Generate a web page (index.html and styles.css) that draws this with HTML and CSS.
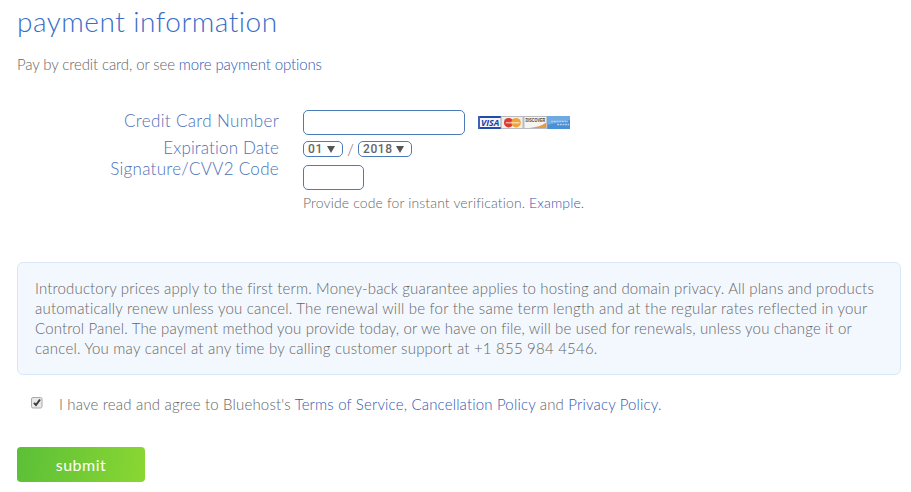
FILE: index.html
```
<!DOCTYPE html>
<html lang="en">
<head>
    <meta charset="UTF-8">
    <meta name="viewport" content="width=device-width, initial-scale=1.0">
    <title>Payment Information</title>
    <link rel="stylesheet" href="styles.css">
</head>
<body>
    <form class="payment">
        <h1>payment information</h1>
        <p class="intro">Pay by credit card, or see <a href="#">more payment options</a></p>

        <div class="card-form">
            <label class="label-number" for="card-number">Credit Card Number</label>
            <div class="field field-number">
                <input type="text" id="card-number" class="card-number">
                <svg class="cards" width="92" height="13" viewBox="0 0 93 13" preserveAspectRatio="none">
                    <rect width="93" height="13" fill="#b9bbc2"/>
                    <rect x="1" y="1" width="21.5" height="11" fill="#f4f6fc"/>
                    <rect width="23" height="2" fill="#234bab"/>
                    <rect y="11" width="23" height="2" fill="#234bab"/>
                    <rect width="2" height="13" fill="#3d60b6"/>
                    <text x="3" y="9.6" class="visa" textLength="18.5" lengthAdjust="spacingAndGlyphs">VISA</text>
                    <rect x="24" y="1" width="21" height="11" fill="#f1eee8"/>
                    <circle cx="31" cy="6.7" r="4.8" fill="#d83c2d"/>
                    <circle cx="38.5" cy="6.7" r="4.8" fill="#efa33a"/>
                    <path d="M28 6.7h14" stroke="#fff" stroke-width="1.6" opacity=".55"/>
                    <rect x="47" y="1" width="22" height="11" fill="#f7f5f1"/>
                    <path d="M69 6.5V12H52c7-.5 13-2.500 17-5.500z" fill="#e79a46"/>
                    <text x="48" y="6.500" class="discover" textLength="20" lengthAdjust="spacingAndGlyphs">DISCOVER</text>
                    <rect x="70" width="23" height="13" fill="#4a90d6"/>
                    <path d="M70 0h23v4L70 9z" fill="#6faae2"/>
                    <path d="M74 5.500h17M80 8.500h12" stroke="#b2d2f0" stroke-width="1.500" stroke-dasharray="2 .7"/>
                </svg>
            </div>

            <label class="label-date" for="month">Expiration Date</label>
            <div class="field field-date">
                <button type="button" id="month" class="select month">01<i></i></button>
                <span class="slash">/</span>
                <button type="button" class="select year">2018<i></i></button>
            </div>

            <label class="label-cvv" for="cvv">Signature/CVV2 Code</label>
            <div class="field field-cvv">
                <input type="text" id="cvv" class="cvv">
                <p class="hint">Provide code for instant verification. <a href="#">Example.</a></p>
            </div>
        </div>

        <div class="notice">
            <span class="l1">Introductory prices apply to the first term. Money-back guarantee applies to hosting and domain privacy. All plans and products</span>
            <span class="l2">automatically renew unless you cancel. The renewal will be for the same term length and at the regular rates reflected in your</span>
            <span class="l3">Control Panel. The payment method you provide today, or we have on file, will be used for renewals, unless you change it or</span>
            <span class="l4">cancel. You may cancel at any time by calling customer support at +1 855 984 4546.</span>
        </div>

        <label class="agree">
            <svg class="check" width="12" height="12" viewBox="0 0 12 12">
                <rect x=".5" y=".5" width="10.500" height="10.500" rx="1.500" fill="#e9e9e9" stroke="#a9a9a9"/>
                <path d="M3 5.800l2 2.200 4-5.500" fill="none" stroke="#3c3c3c" stroke-width="2"/>
            </svg>
            <span class="agree-text">I have read and agree to Bluehost's <a href="#">Terms of Service</a>, <a href="#">Cancellation Policy</a> and <a href="#">Privacy Policy</a>.</span>
        </label>

        <button type="button" class="submit">submit</button>
    </form>
</body>
</html>
```

FILE: styles.css
```
* {
    box-sizing: border-box;
}
body {
    margin: 0;
    background: #fff;
    color: #666;
    font-family: Lato, "Open Sans", sans-serif;
    font-weight: 300;
    font-size: 15px;
}
a {
    color: #2f59b0;
    text-decoration: none;
}
.payment {
    padding: 0 10px 0 17px;
}
h1 {
    margin: 0;
    padding-top: 3px;
    font-size: 28px;
    font-weight: 300;
    line-height: 36px;
    letter-spacing: 0.5px;
    color: #3a6cc8;
}
.intro {
    margin: 15px 0 0;
    line-height: 20px;
    letter-spacing: -0.12px;
    white-space: nowrap;
}
.card-form {
    display: grid;
    grid-template-columns: 262px 1fr;
    grid-template-rows: 30px 25px auto;
    column-gap: 24px;
    margin-top: 36px;
}
.card-form label {
    justify-self: end;
    font-size: 17px;
    line-height: 22px;
    letter-spacing: 0.35px;
    color: #4d70b8;
    white-space: nowrap;
}
.card-form .label-date {
    margin-top: -3px;
    letter-spacing: 0.15px;
}
.card-form .label-cvv {
    margin-top: -7px;
    letter-spacing: 0.3px;
}
.field {
    display: flex;
    align-items: center;
}
.field input {
    border: 1px solid #4a7cba;
    border-radius: 5px;
    background: #fff;
}
.field-number {
    align-items: flex-start;
}
.field .card-number {
    width: 162px;
    height: 25px;
}
.cards {
    margin: 6px 0 0 13px;
}
.visa {
    font: italic bold 9px "Open Sans", sans-serif;
    fill: #1d429f;
}
.discover {
    font: bold 5px "Liberation Sans", sans-serif;
    fill: #4a423b;
}
.field-date {
    align-items: flex-start;
    padding-top: 1px;
}
.select {
    display: flex;
    align-items: center;
    justify-content: space-between;
    height: 16px;
    padding: 0 7px 0 4px;
    border: 1px solid #4a7cba;
    border-radius: 5px;
    background: #fff;
    color: #666;
    font: 500 12px Roboto, sans-serif;
    letter-spacing: 0.6px;
}
.select i {
    border: 4px solid transparent;
    border-top: 7px solid #555;
    border-bottom: 0;
}
.month {
    width: 40px;
}
.year {
    width: 54px;
}
.slash {
    width: 15px;
    text-align: center;
    line-height: 16px;
}
.field-cvv {
    flex-direction: column;
    align-items: flex-start;
}
.field .cvv {
    width: 61px;
    height: 25px;
}
.hint {
    margin: 3px 0 0;
    line-height: 20px;
    font-size: 14px;
    letter-spacing: 0.13px;
    white-space: nowrap;
}
.notice {
    display: flex;
    flex-direction: column;
    align-items: flex-start;
    height: 113px;
    margin-top: 49px;
    padding: 15px 17px;
    border: 1px solid #d9e8f6;
    border-radius: 6px;
    background: #f3f8fe;
    line-height: 20px;
    letter-spacing: 0.15px;
    white-space: nowrap;
}
.notice .l2,
.notice .l4 {
    letter-spacing: 0.22px;
}
.agree {
    display: flex;
    align-items: center;
    margin: 19px 0 0 14px;
    line-height: 20px;
    letter-spacing: 0.17px;
}
.check {
    margin: 0 16px 2px 0;
}
.submit {
    display: block;
    width: 128px;
    height: 35px;
    margin-top: 33px;
    padding: 0 0 1px;
    border: 0;
    border-radius: 4px;
    background: linear-gradient(100deg, #5bbf38, #8ad732);
    color: #fff;
    font: 400 16px Lato, sans-serif;
    letter-spacing: 0.5px;
}
```
